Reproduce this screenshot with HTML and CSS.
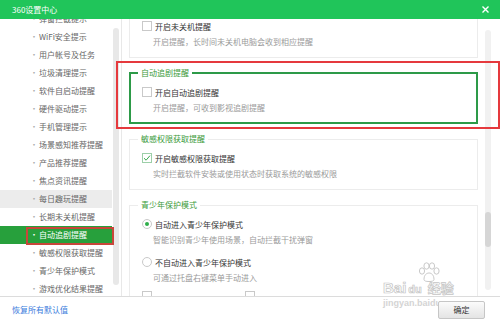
FILE: index.html
```html
<!DOCTYPE html>
<html lang="zh-CN">
<head>
  <meta charset="UTF-8" />
  <meta name="viewport" content="width=device-width, initial-scale=1.0"/>
  <title>360设置中心</title>
  <link rel="stylesheet" href="styles.css">
</head>
<body>
  <div class="window">
    <header class="titlebar">
      <span class="title">360设置中心</span>
      <button class="close" aria-label="关闭">
        <svg width="7" height="7" viewBox="0 0 7 7"><path d="M0.5 0.5L6.5 6.5M6.5 0.5L0.5 6.5" stroke="#fff" stroke-width="1.4"/></svg>
      </button>
    </header>

    <div class="main">
      <aside class="sidebar">
        <ul class="nav">
          <li>弹窗拦截提示</li>
          <li>WiFi安全提示</li>
          <li>用户帐号及任务</li>
          <li>垃圾清理提示</li>
          <li>软件自启动提醒</li>
          <li>硬件驱动提示</li>
          <li>手机管理提示</li>
          <li>场景感知推荐提醒</li>
          <li>产品推荐提醒</li>
          <li>焦点资讯提醒</li>
          <li class="hover">每日趣玩提醒</li>
          <li>长期未关机提醒</li>
          <li class="active">自动追剧提醒</li>
          <li>敏感权限获取提醒</li>
          <li>青少年保护模式</li>
          <li>游戏优化结果提醒</li>
        </ul>
        <div class="side-scroll"></div>
      </aside>

      <section class="content">
        <div class="cards">
          <fieldset class="card first">
            <label class="opt"><span class="check"></span>开启未关机提醒</label>
            <div class="desc">开启提醒，长时间未关机电脑会收到相应提醒</div>
          </fieldset>

          <fieldset class="card focus">
            <legend>自动追剧提醒</legend>
            <label class="opt"><span class="check"></span>开启自动追剧提醒</label>
            <div class="desc">开启提醒，可收到影视追剧提醒</div>
          </fieldset>

          <fieldset class="card">
            <legend>敏感权限获取提醒</legend>
            <label class="opt"><span class="check on"><svg width="8" height="8" viewBox="0 0 8 8"><path d="M1 4.2L3.1 6.2L7 1.6" fill="none" stroke="#39a94f" stroke-width="1"/></svg></span>开启敏感权限获取提醒</label>
            <div class="desc">实时拦截软件安装或使用状态时获取系统的敏感权限</div>
          </fieldset>

          <fieldset class="card">
            <legend>青少年保护模式</legend>
            <label class="opt"><span class="radio on"></span>自动进入青少年保护模式</label>
            <div class="desc">智能识别青少年使用场景，自动拦截干扰弹窗</div>
            <label class="opt gap"><span class="radio"></span>不自动进入青少年保护模式</label>
            <div class="desc">可通过托盘右键菜单手动进入</div>
            <div class="opt-row">
              <span class="check"></span>
              <span class="check"></span>
            </div>
          </fieldset>
        </div>
        <div class="scroll"><div class="thumb"></div></div>
      </section>
    </div>

    <div class="watermark">
      <svg class="paw" width="24" height="20" viewBox="0 0 24 20">
        <g fill="none" stroke="#c9c9c9" stroke-width="1">
          <ellipse cx="5" cy="9" rx="2.6" ry="3.2"/>
          <ellipse cx="9.5" cy="4" rx="2.6" ry="3.2"/>
          <ellipse cx="15" cy="4" rx="2.6" ry="3.2"/>
          <ellipse cx="19.5" cy="9" rx="2.6" ry="3.2"/>
          <path d="M7 17.5C7 13 9.5 11 12 11C14.5 11 17 13 17 17.5C17 19 15 19.5 12 19.5C9 19.5 7 19 7 17.5Z"/>
        </g>
      </svg>
      <div class="wm-logo"><span>Bai</span><span class="du">du</span><span class="jy">经验</span></div>
      <div class="wm-url">jingyan.baidu.com</div>
    </div>

    <footer class="footer">
      <a href="#">恢复所有默认值</a>
      <button class="ok">确定</button>
    </footer>

    <div class="mark mark-main"></div>
    <div class="mark mark-nav"></div>
  </div>
</body>
</html>
```

FILE: styles.css
```css
* {
  box-sizing: border-box;
}
body {
  margin: 0;
  font-family: "Noto Sans CJK SC", "Noto Sans", sans-serif;
  font-size: 8px;
  color: #333;
  background: #fff;
}
.window {
  position: relative;
  width: 500px;
  height: 321px;
  overflow: hidden;
  display: flex;
  flex-direction: column;
}
.titlebar {
  flex: none;
  height: 19px;
  background: #20c55a;
  color: #fff;
  display: flex;
  align-items: center;
  justify-content: space-between;
  padding: 0 11px 0 12px;
}
.title {
  line-height: 19px;
}
.close {
  background: none;
  border: 0;
  padding: 0;
  display: flex;
}
.main {
  flex: 1;
  min-height: 0;
  display: flex;
  overflow: hidden;
}
.sidebar {
  flex: none;
  width: 122px;
  display: flex;
  border-right: 1px solid #e8e8e8;
  overflow: hidden;
}
.nav {
  flex: none;
  list-style: none;
  width: 112px;
  margin: -9px 0 0;
  padding: 0;
}
.nav li {
  height: 18px;
  line-height: 18px;
  padding-left: 30px;
  color: #666;
  white-space: nowrap;
}
.nav li::before {
  content: "·";
  display: inline-block;
  width: 9px;
  color: #aaa;
}
.nav li.hover {
  background: #ececec;
}
.nav li.active {
  background: #27a03c;
  color: #fff;
}
.nav li.active::before {
  color: #fff;
}
.side-scroll {
  flex: none;
  width: 6px;
  margin: 9px 0 11px 1px;
  background: #e8e8e8;
  border-radius: 3px;
}
.content {
  flex: 1;
  min-width: 0;
  display: flex;
  overflow: hidden;
}
.cards {
  flex: none;
  width: 356px;
  padding-left: 7px;
  margin-top: -12px;
  display: flex;
  flex-direction: column;
  gap: 9px;
}
.card {
  margin: 0;
  min-width: 0;
  padding: 5px 10px 7px 12px;
  border: 1px solid #ececec;
}
.card.first {
  padding-top: 10px;
}
.card legend {
  margin-left: -4px;
  padding: 0 3px;
  line-height: 12px;
  color: #3a9a3a;
}
.card.focus {
  border: 2px solid #2d9a48;
  padding: 5px 9px 6px 11px;
}
.opt {
  display: flex;
  align-items: center;
  height: 16px;
  color: #333;
  white-space: nowrap;
}
.opt.gap {
  margin-top: 6px;
}
.opt-row {
  display: flex;
  gap: 90px;
  margin-top: 5px;
}
.check {
  flex: none;
  width: 10px;
  height: 10px;
  margin-right: 3px;
  border: 1px solid #c9c9c9;
  background: #fff;
  display: flex;
  align-items: center;
  justify-content: center;
}
.check.on {
  border-color: #9ccfa8;
}
.radio {
  flex: none;
  width: 10px;
  height: 10px;
  margin-right: 3px;
  border: 1px solid #c9c9c9;
  border-radius: 50%;
  background: #fff;
  display: flex;
  align-items: center;
  justify-content: center;
}
.radio.on::after {
  content: "";
  width: 4px;
  height: 4px;
  border-radius: 50%;
  background: #2fae4a;
}
.desc {
  height: 16px;
  line-height: 16px;
  padding-left: 11px;
  color: #9a9a9a;
  white-space: nowrap;
}
.scroll {
  flex: none;
  width: 6px;
  margin: 11px 0 6px 7px;
  padding-top: 182px;
  background: #f1f1f1;
  border-radius: 3px;
}
.thumb {
  height: 35px;
  background: #d6d6d6;
  border-radius: 3px;
}
.footer {
  flex: none;
  height: 25px;
  border-top: 1px solid #dcdcdc;
  display: flex;
  align-items: center;
  justify-content: space-between;
  padding: 0 15px 0 12px;
  background: #fff;
}
.footer a {
  color: #3b7ddd;
  text-decoration: none;
}
.ok {
  position: relative;
  width: 47px;
  height: 18px;
  margin-top: 1px;
  border: 1px solid #c6c6c6;
  border-radius: 2px;
  background: linear-gradient(#fbfbfb, #e4e4e4);
  font-family: inherit;
  font-size: 8px;
  color: #333;
  padding: 0;
}
.watermark {
  position: absolute;
  left: 383px;
  top: 262px;
  width: 92px;
}
.paw {
  display: block;
  margin-left: 34px;
}
.wm-logo {
  display: flex;
  align-items: baseline;
  margin-top: -2px;
  font-family: "Liberation Sans", sans-serif;
  font-weight: bold;
  font-size: 15px;
  line-height: 15px;
  color: rgba(255, 255, 255, 0.4);
  -webkit-text-stroke: 0.7px #c4c4c4;
}
.wm-logo .du {
  font-size: 11px;
  margin-left: 2px;
}
.wm-logo .jy {
  font-family: "Noto Sans CJK SC", sans-serif;
  font-size: 13px;
  margin-left: 6px;
}
.wm-url {
  margin-top: 1px;
  font-family: "Liberation Sans", sans-serif;
  font-weight: bold;
  font-size: 9px;
  color: #d4d4d4;
}
.mark {
  position: absolute;
  border: 2px solid #e5393d;
  pointer-events: none;
}
.mark-main {
  left: 116px;
  top: 61px;
  width: 384px;
  height: 68px;
}
.mark-nav {
  left: 26px;
  top: 227px;
  width: 88px;
  height: 18px;
  border-color: #c8463a;
}
```
